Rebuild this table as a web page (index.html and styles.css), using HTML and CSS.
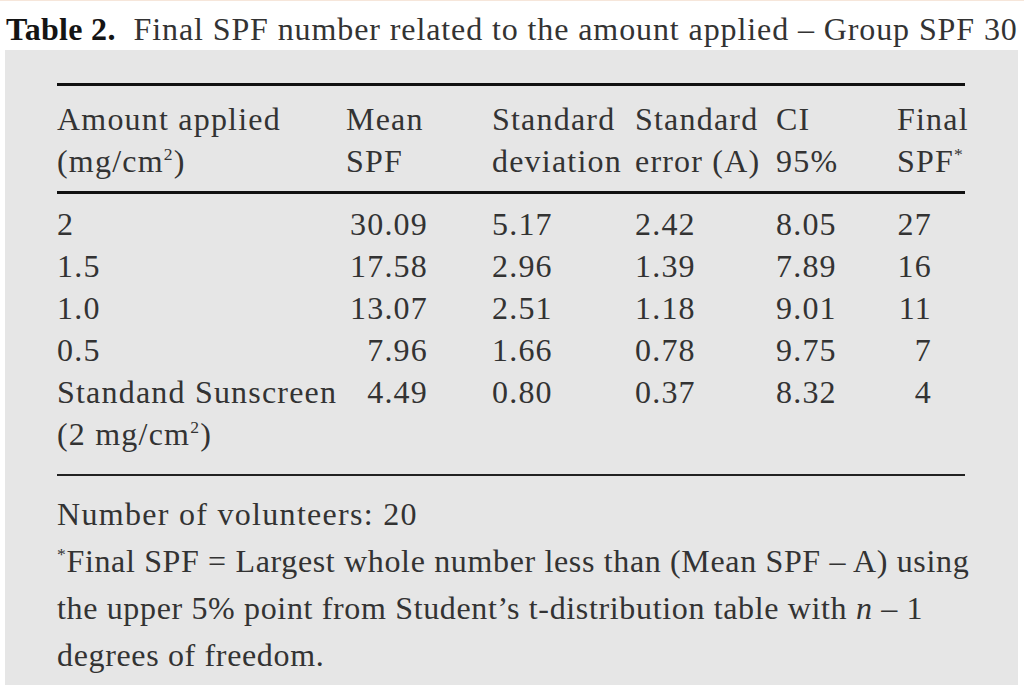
FILE: index.html
```html
<!DOCTYPE html>
<html>
<head>
<meta charset="utf-8">
<link rel="stylesheet" href="styles.css">
</head>
<body>
<div class="page">
  <div class="title"><b>Table 2.</b>&nbsp; Final SPF number related to the amount applied – Group SPF 30</div>
  <div class="panel">
    <table class="data">
      <colgroup>
        <col class="c1"><col class="c2"><col class="c3"><col class="c4"><col class="c5"><col class="c6">
      </colgroup>
      <thead>
        <tr>
          <th>Amount applied<br>(mg/cm<sup>2</sup>)</th>
          <th>Mean<br>SPF</th>
          <th>Standard<br>deviation</th>
          <th>Standard<br>error (A)</th>
          <th>CI<br>95%</th>
          <th>Final<br>SPF<sup>*</sup></th>
        </tr>
      </thead>
      <tbody>
        <tr class="first"><td>2</td><td><span class="mean">30.09</span></td><td>5.17</td><td>2.42</td><td>8.05</td><td><span class="fin">27</span></td></tr>
        <tr><td>1.5</td><td><span class="mean">17.58</span></td><td>2.96</td><td>1.39</td><td>7.89</td><td><span class="fin">16</span></td></tr>
        <tr><td>1.0</td><td><span class="mean">13.07</span></td><td>2.51</td><td>1.18</td><td>9.01</td><td><span class="fin">11</span></td></tr>
        <tr><td>0.5</td><td><span class="mean">7.96</span></td><td>1.66</td><td>0.78</td><td>9.75</td><td><span class="fin">7</span></td></tr>
        <tr class="last"><td>Standand Sunscreen<br>(2 mg/cm<sup>2</sup>)</td><td><span class="mean">4.49</span></td><td>0.80</td><td>0.37</td><td>8.32</td><td><span class="fin">4</span></td></tr>
      </tbody>
    </table>
    <div class="notes">
      <p class="count">Number of volunteers: 20</p>
      <p><sup>*</sup>Final SPF = Largest whole number less than (Mean SPF – A) using<br>the upper 5% point from Student’s t-distribution table with <i>n</i> – 1<br>degrees of freedom.</p>
    </div>
  </div>
</div>
</body>
</html>
```
FILE: styles.css
```css
html, body {
  margin: 0;
  padding: 0;
  background: #ffffff;
}
body {
  font-family: "Liberation Serif", "Times New Roman", serif;
  color: #333333;
}
.page {
  width: 1024px;
  height: 685px;
  border-top: 1px solid #f6e6da;
  box-sizing: border-box;
  overflow: hidden;
}
.title {
  font-size: 32px;
  line-height: 44px;
  letter-spacing: 0.9px;
  padding: 6px 0 0 6px;
  height: 43px;
  white-space: nowrap;
  color: #333;
}
.title b {
  color: #141414;
  letter-spacing: 0.3px;
}
.panel {
  margin-left: 5px;
  width: 1013px;
  height: 640px;
  background: #e6e6e6;
  padding: 33px 0 0 52px;
  box-sizing: border-box;
}
.data {
  width: 908px;
  border-collapse: collapse;
  table-layout: fixed;
  font-size: 32px;
  line-height: 42px;
  letter-spacing: 1.2px;
}
.c1 { width: 289px; }
.c2 { width: 146px; }
.c3 { width: 143px; }
.c4 { width: 141px; }
.c5 { width: 121px; }
.c6 { width: 68px; }
.data th, .data td {
  padding: 0;
  text-align: left;
  vertical-align: top;
  font-weight: normal;
  white-space: nowrap;
}
.data thead th {
  border-top: 3px solid #111;
  border-bottom: 3px solid #111;
  padding-top: 12px;
  padding-bottom: 9px;
}
.data tr.first td { padding-top: 9px; }
.data tr.last td {
  padding-bottom: 19px;
  border-bottom: 2px solid #222;
}
.data sup, .notes sup {
  font-size: 0.55em;
  line-height: 0;
  vertical-align: 0.7em;
}
.mean {
  display: inline-block;
  width: 82px;
  text-align: right;
}
.fin {
  display: inline-block;
  width: 35px;
  text-align: right;
}
.notes {
  font-size: 32px;
  line-height: 47px;
  letter-spacing: 0.65px;
  padding-top: 15px;
  white-space: nowrap;
}
.notes p {
  margin: 0;
}
.notes .count {
  letter-spacing: 1.3px;
}
```
